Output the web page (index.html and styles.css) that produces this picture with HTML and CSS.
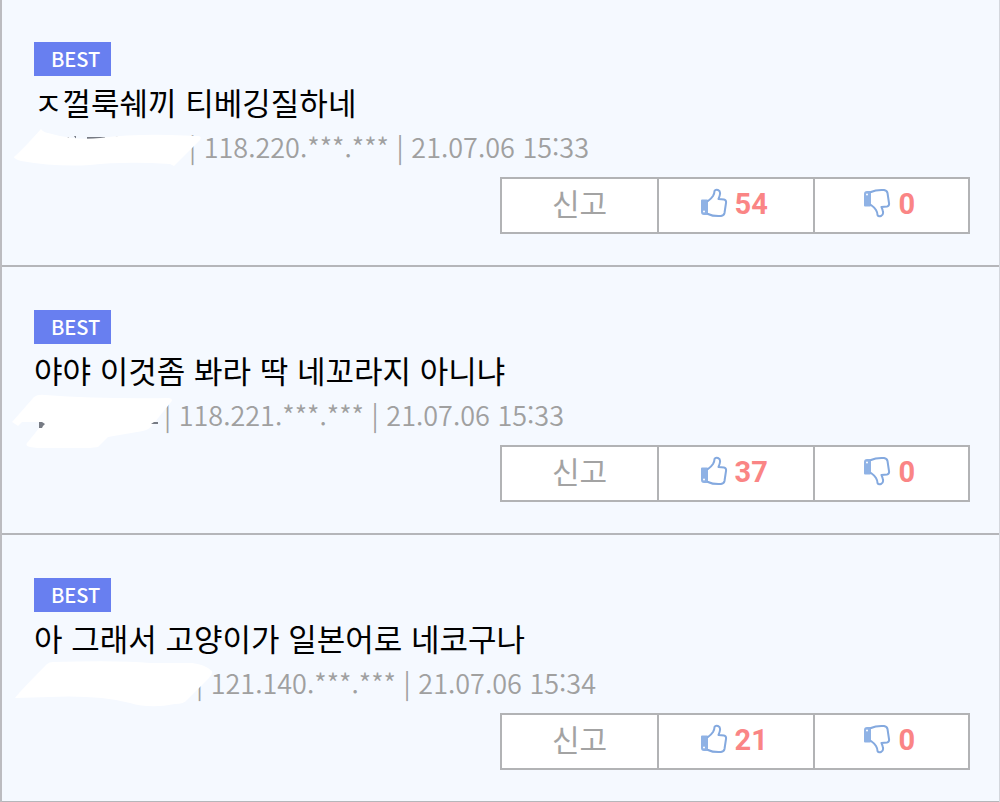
FILE: index.html
```html
<!DOCTYPE html>
<html lang="ko">
  <head>
    <meta charset="UTF-8" />
    <meta name="viewport" content="width=device-width, initial-scale=1.0" />
    <title>베스트 댓글</title>
    <link rel="stylesheet" href="styles.css">
  </head>
  <body>
    <!-- shared icons -->
    <svg class="defs" width="0" height="0" aria-hidden="true">
      <symbol id="thumb" viewBox="0 0 28 30">
        <path d="M2 12.500 H7 V26 H4 Q2 26 2 24 Z" fill="#8fb2e5" stroke="#8fb2e5" stroke-width="2" stroke-linejoin="round" />
        <path d="M8 13 Q11 11 13 8 Q14.500 5.500 14.500 3 Q15.500 1 18 2 Q20.500 3 20 6 Q19.800 8 18.500 11 L24 11.500 Q26.500 12 26 15 L24.500 25 Q24 27.500 21 28 Q13 28.500 8 26" fill="#fff" stroke="#84a9df" stroke-width="2" stroke-linejoin="round" stroke-linecap="round" />
        <circle cx="4" cy="23.500" r="1" fill="#fff" />
      </symbol>
    </svg>

    <ul class="comments">
      <li class="comment">
        <span class="badge">BEST</span>
        <p class="text">ㅈ껄룩쉐끼 티베깅질하네</p>
        <p class="meta">
          <span class="nick nick-a"></span>| 118.220.***.*** | 21.07.06 15:33
          <svg class="mask" width="240" height="60" viewBox="0 120 240 60" aria-hidden="true">
            <path d="M67 137h2v3M74 136h2v3M87 137h18v2H87zM114 138q3-3 6 0" fill="#777b84" />
            <path d="M14 157 Q24 148 41 129 Q43 132 48 133 Q76 141 100 138 Q133 134 170 135 L199 136 Q202 137 200 140 L174 166 L170 164 Q125 161 90 165 Q56 167 21 161 Q14 159 14 157Z" fill="#fff" />
          </svg>
        </p>
        <div class="actions">
          <button class="report">신고</button>
          <button class="vote"><svg class="icon" aria-label="추천"><use href="#thumb" /></svg>54</button>
          <button class="vote"><svg class="icon down" aria-label="비추천"><use href="#thumb" /></svg>0</button>
        </div>
      </li>

      <li class="comment">
        <span class="badge">BEST</span>
        <p class="text">야야 이것좀 봐라 딱 네꼬라지 아니냐</p>
        <p class="meta">
          <span class="nick nick-b"></span>| 118.221.***.*** | 21.07.06 15:33
          <svg class="mask" width="240" height="60" viewBox="0 120 240 60" aria-hidden="true">
            <path d="M12 154 L34 129 Q38 126 45 127 Q100 131 169 130 Q174 131 171 134 L151 159 Q147 163 137 164 L108 169 L98 179 Q62 184 30 179 Q25 178 27 175 L44 154 L22 154 L18 158Z" fill="#fff" />
            <path d="M39 154h3l3 2-2 2-1 2h-3zM151 156l3-2h4v2z" fill="#777b84" />
          </svg>
        </p>
        <div class="actions">
          <button class="report">신고</button>
          <button class="vote"><svg class="icon" aria-label="추천"><use href="#thumb" /></svg>37</button>
          <button class="vote"><svg class="icon down" aria-label="비추천"><use href="#thumb" /></svg>0</button>
        </div>
      </li>

      <li class="comment">
        <span class="badge">BEST</span>
        <p class="text">아 그래서 고양이가 일본어로 네코구나</p>
        <p class="meta">
          <span class="nick nick-c"></span>| 121.140.***.*** | 21.07.06 15:34
          <svg class="mask" width="240" height="60" viewBox="0 120 240 60" aria-hidden="true">
            <path d="M15 162 Q20 155 47 128 Q49 126 53 126 Q120 124 150 127 L192 127 Q204 128 212 135 Q213 138 209 142 L187 164 Q184 168 175 168 Q150 173 130 167 Q98 159 50 161Z" fill="#fff" />
          </svg>
        </p>
        <div class="actions">
          <button class="report">신고</button>
          <button class="vote"><svg class="icon" aria-label="추천"><use href="#thumb" /></svg>21</button>
          <button class="vote"><svg class="icon down" aria-label="비추천"><use href="#thumb" /></svg>0</button>
        </div>
      </li>
    </ul>
  </body>
</html>
```
FILE: styles.css
```css
* {
  box-sizing: border-box;
}

body {
  margin: 0;
  background: #f5f9ff;
  font-family: "Noto Sans CJK KR", sans-serif;
}

.defs {
  position: absolute;
}

.comments {
  margin: 0;
  padding: 0;
  list-style: none;
  border-left: 2px solid #bcbcc0;
  border-right: 1px solid #d4d7dd;
}

.comment {
  padding: 43px 29px 31px 32px;
  border-bottom: 2px solid #b5b6ba;
}

.comment:first-child {
  padding-top: 42px;
}

.badge {
  display: block;
  width: 77px;
  height: 34px;
  padding-left: 17px;
  background: #687ff0;
  color: #fff;
  font-size: 20px;
  font-weight: 500;
  line-height: 33px;
}

.text {
  margin: 3px 0 0;
  color: #000;
  font-size: 31px;
  line-height: 46px;
}

.meta {
  position: relative;
  margin: 0;
  color: #a0a0a0;
  font-size: 27px;
  font-weight: 350;
  line-height: 44px;
}

.nick {
  display: inline-block;
}

.nick-a {
  width: 155px;
}

.nick-b {
  width: 130px;
}

.nick-c {
  width: 162px;
}

/* scribble over the nickname */
.mask {
  position: absolute;
  top: -5px;
  left: -34px;
}

.actions {
  display: grid;
  grid-template-columns: 155px 1fr 1fr;
  width: 470px;
  height: 57px;
  margin: 8px 0 0 auto;
  border: 2px solid #b2b3b5;
  background: #fff;
}

.actions button {
  display: flex;
  align-items: center;
  justify-content: center;
  padding: 0 0 4px;
  border: 0;
  background: none;
}

.actions button + button {
  border-left: 2px solid #b2b3b5;
}

.actions .report {
  padding-bottom: 8px;
  color: #a3a3a3;
  font-family: "Noto Sans CJK KR", sans-serif;
  font-size: 30px;
}

.actions .vote {
  gap: 7px;
  padding-right: 4px;
  color: #fa8585;
  font-family: Roboto, sans-serif;
  font-size: 29px;
  font-weight: 700;
}

.icon {
  width: 28px;
  height: 30px;
  margin-bottom: 2px;
}

.down {
  transform: scaleY(-1);
}
```
